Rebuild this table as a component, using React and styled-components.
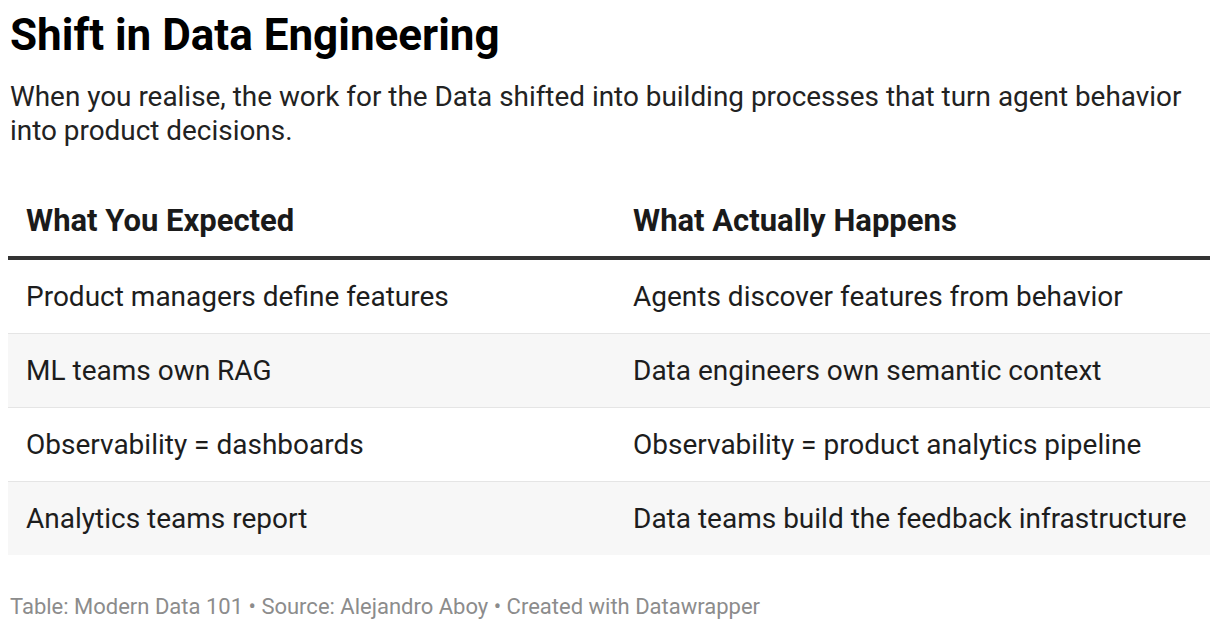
import React from "react";
import styled, { createGlobalStyle } from "styled-components";

const GlobalStyle = createGlobalStyle`
  html, body { margin: 0; padding: 0; background: #ffffff; }
  body { font-family: Roboto, "Liberation Sans", sans-serif; color: #181818; }
`;

const Page = styled.div`
  padding: 9px 10px 0 8px;
  display: flex;
  flex-direction: column;
`;

const Title = styled.h1`
  margin: 0 0 0 2px;
  font-size: 44px;
  line-height: 52px;
  font-weight: 700;
  color: #000;
`;

const Description = styled.p`
  margin: 19px 0 0 2px;
  font-size: 27.9px;
  line-height: 34px;
  color: #222;
`;

const Table = styled.table`
  margin-top: 55px;
  width: 100%;
  border-collapse: collapse;
  table-layout: fixed;
`;

const HeadCell = styled.th`
  text-align: left;
  font-size: 31px;
  font-weight: 700;
  color: #1a1a1a;
  padding: 0 17px 17px 18px;
  line-height: 36px;
  border-bottom: 4px solid #333;
  width: ${(p) => p.$w || "auto"};
`;

const Row = styled.tr`
  background: ${(p) => (p.$alt ? "#f7f7f7" : "#ffffff")};
  border-bottom: ${(p) => (p.$last ? "none" : "1px solid #e5e5e5")};
`;

const Cell = styled.td`
  font-size: 28px;
  line-height: 34px;
  color: #1d1d1d;
  padding: 20px 17px 19px 18px;
`;

const Footer = styled.div`
  margin: 38px 0 0 2px;
  font-size: 22px;
  line-height: 28px;
  color: #8c8c8c;
`;

const rows = [
  ["Product managers define features", "Agents discover features from behavior"],
  ["ML teams own RAG", "Data engineers own semantic context"],
  ["Observability = dashboards", "Observability = product analytics pipeline"],
  ["Analytics teams report", "Data teams build the feedback infrastructure"],
];

export default function App() {
  return (
    <Page>
      <GlobalStyle />
      <Title>Shift in Data Engineering</Title>
      <Description>
        When you realise, the work for the Data shifted into building processes that turn agent behavior into product decisions.
      </Description>
      <Table>
        <thead>
          <tr>
            <HeadCell $w="572px">What You Expected</HeadCell>
            <HeadCell>What Actually Happens</HeadCell>
          </tr>
        </thead>
        <tbody>
          {rows.map((r, i) => (
            <Row key={i} $alt={i % 2 === 1} $last={i === rows.length - 1}>
              <Cell>{r[0]}</Cell>
              <Cell>{r[1]}</Cell>
            </Row>
          ))}
        </tbody>
      </Table>
      <Footer>Table: Modern Data 101 • Source: Alejandro Aboy • Created with Datawrapper</Footer>
    </Page>
  );
}
